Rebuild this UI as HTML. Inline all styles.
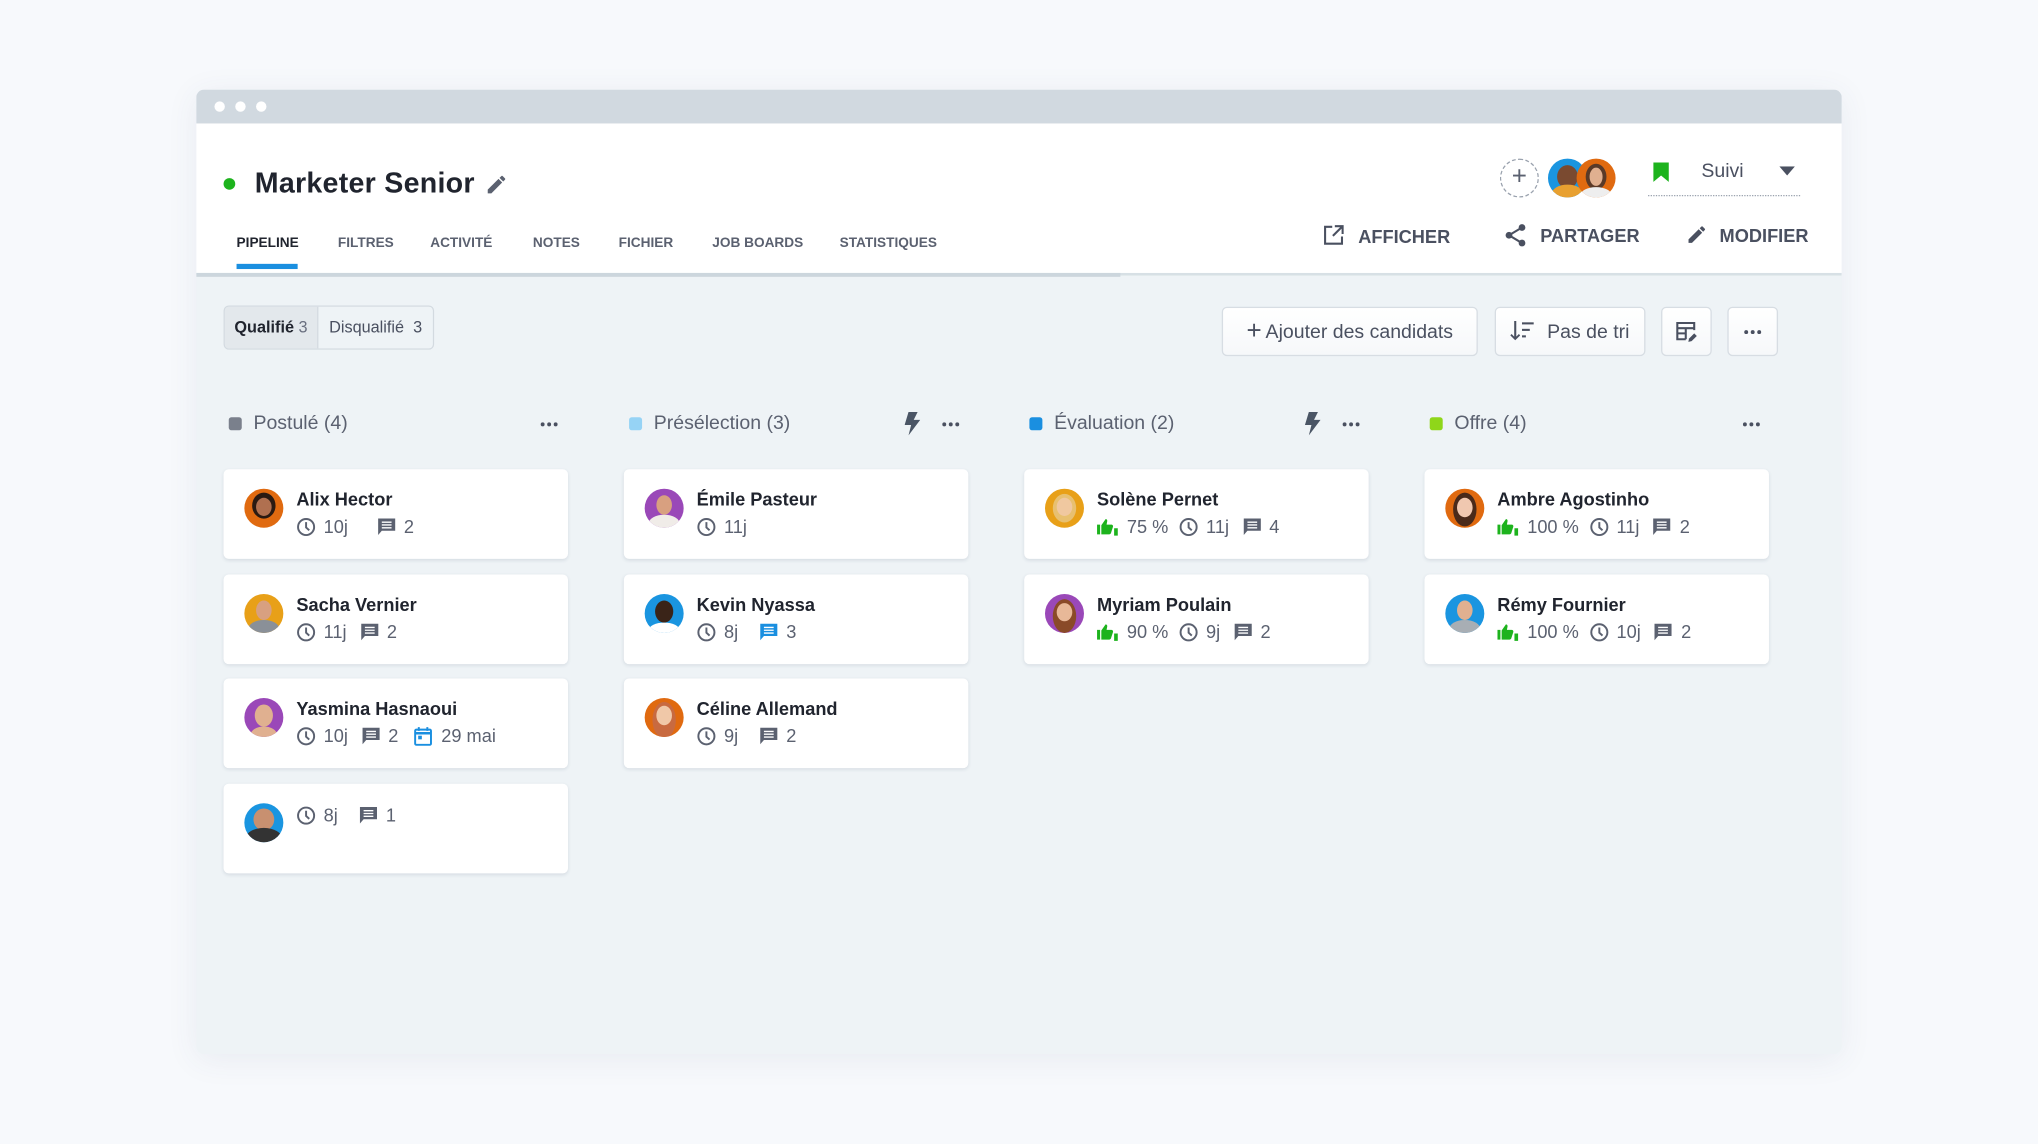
<!DOCTYPE html>
<html><head><meta charset="utf-8"><style>
*{box-sizing:border-box;margin:0;padding:0}
html,body{width:2038px;height:1144px;overflow:hidden;background:#f7f9fc;font-family:"Liberation Sans",sans-serif}
#s{position:absolute;left:0;top:0;width:1568px;height:880px;transform:scale(1.29974);transform-origin:0 0}
.a{position:absolute}
.win{left:151px;top:69px;width:1266px;height:742px;background:#eef3f6;border-radius:6px;overflow:hidden;box-shadow:0 4px 24px rgba(60,80,110,.08)}
.tb{left:0;top:0;width:1266px;height:26px;background:#d1d9e0}
.dot{width:8px;height:8px;border-radius:50%;background:#fff;top:9px}
.hd{left:0;top:26px;width:1266px;height:117px;background:#fff;border-bottom:2px solid #d7e0e5}
.tab{font-size:10.5px;font-weight:700;color:#5b6170;top:112px}
.btn{background:#fff;border:1px solid #d7dde3;border-radius:4px;height:38px;top:236px;display:flex;align-items:center;justify-content:center;color:#4a5060;font-size:15px;background:linear-gradient(#fff,#f6f8fa)}
.col{font-size:15px;color:#5b6170;top:317px;display:flex;align-items:center}
.sq{width:10px;height:10px;border-radius:2px;margin-right:9px}
.dots{font-size:14px;font-weight:700;color:#5b6170;letter-spacing:0px}
.d3{position:absolute;display:flex;gap:2px}
.d3 i{width:3px;height:3px;border-radius:50%;background:#4a5060;display:block}
.card{position:absolute;width:265px;height:69px;background:#fff;border-radius:4px;box-shadow:0 1px 3px rgba(40,60,90,.12)}
.av{position:absolute;left:16px;top:15px;width:30px;height:30px;border-radius:50%;overflow:hidden}
.nm{position:absolute;left:56px;top:15px;font-size:14px;font-weight:600;color:#20242e}
.mt{position:absolute;left:56px;top:36px;display:flex;align-items:center;font-size:14px;color:#5b6170;white-space:nowrap}
.mt svg{margin-right:6px}
.mt span{margin-right:14px}
</style></head><body><div id="s">
<div class="a win">
 <div class="a tb"></div>
 <div class="a dot" style="left:14px"></div><div class="a dot" style="left:30px"></div><div class="a dot" style="left:46px"></div>
 <div class="a hd"></div>
 <div class="a" style="left:0;top:141px;width:711px;height:3px;background:#ccd6dd"></div>
 <div class="a" style="left:21px;top:68px;width:9px;height:9px;border-radius:50%;background:#1db31d"></div>
 <div class="a" style="left:45px;top:59px;font-size:22px;font-weight:700;color:#20242e;letter-spacing:.2px">Marketer Senior</div>
 <svg class="a" style="left:222px;top:64px" width="18" height="18" viewBox="0 0 24 24"><path d="M3 17.25V21h3.75L17.8 9.94l-3.75-3.75zM20.7 7.04a1 1 0 000-1.41l-2.34-2.34a1 1 0 00-1.41 0l-1.83 1.83 3.75 3.75z" fill="#5b6170"/></svg>
 <div class="a tab" style="left:31px;color:#20242e">PIPELINE</div>
 <div class="a" style="left:31px;top:134px;width:47px;height:4px;background:#1a8fe0"></div>
 <div class="a tab" style="left:109px">FILTRES</div>
 <div class="a tab" style="left:180px">ACTIVITÉ</div>
 <div class="a tab" style="left:259px">NOTES</div>
 <div class="a tab" style="left:325px">FICHIER</div>
 <div class="a tab" style="left:397px">JOB BOARDS</div>
 <div class="a tab" style="left:495px">STATISTIQUES</div>
 <div class="a" style="left:1003px;top:53px;width:30px;height:30px;border-radius:50%;border:1.5px dashed #9aa2ae;color:#5b6170;font-size:20px;line-height:26px;text-align:center">+</div>
 <div class="a" style="left:1040px;top:53px;width:30px;height:30px;border-radius:50%;background:#1a95e0;overflow:hidden"><div style="position:absolute;left:7px;top:5px;width:16px;height:18px;border-radius:50%;background:#7a4a30"></div><div style="position:absolute;left:3px;top:20px;width:24px;height:14px;border-radius:50%;background:#e8a030"></div></div>
 <div class="a" style="left:1062px;top:53px;width:30px;height:30px;border-radius:50%;background:#e06a10;overflow:hidden"><div style="position:absolute;left:7px;top:4px;width:16px;height:20px;border-radius:50%;background:#e0b090;border:3px solid #5a3a28"></div><div style="position:absolute;left:3px;top:22px;width:24px;height:12px;border-radius:50%;background:#eee"></div></div>
 <svg class="a" style="left:1121px;top:56px" width="12" height="15" viewBox="0 0 12 15"><path d="M0 0h12v15L6 10 0 15z" fill="#1db31d"/></svg>
 <div class="a" style="left:1158px;top:54px;font-size:15px;color:#4a5060">Suivi</div>
 <svg class="a" style="left:1218px;top:59px" width="12" height="7"><path d="M0 0h12L6 7z" fill="#4a5060"/></svg>
 <div class="a" style="left:1117px;top:81px;width:117px;border-top:1px dotted #9aa2ae"></div>
 <svg class="a" style="left:867px;top:104px" width="16" height="16" viewBox="0 0 16 16" fill="none" stroke="#4a5060" stroke-width="1.6"><path d="M7 1.5H1.5v13h13V9M9 1h6v6M15 1L7.5 8.5"/></svg>
 <div class="a" style="left:894px;top:105px;font-size:14px;font-weight:700;color:#4a5060">AFFICHER</div>
 <svg class="a" style="left:1007px;top:103px" width="16" height="18" viewBox="0 0 16 18"><circle cx="13" cy="3" r="2.6" fill="#4a5060"/><circle cx="3" cy="9" r="2.6" fill="#4a5060"/><circle cx="13" cy="15" r="2.6" fill="#4a5060"/><path d="M13 3L3 9l10 6" stroke="#4a5060" stroke-width="1.6" fill="none"/></svg>
 <div class="a" style="left:1034px;top:104px;font-size:14px;font-weight:700;color:#4a5060">PARTAGER</div>
 <svg class="a" style="left:1146px;top:103px" width="17" height="17" viewBox="0 0 24 24"><path d="M3 17.25V21h3.75L17.8 9.94l-3.75-3.75zM20.7 7.04a1 1 0 000-1.41l-2.34-2.34a1 1 0 00-1.41 0l-1.83 1.83 3.75 3.75z" fill="#4a5060"/></svg>
 <div class="a" style="left:1172px;top:104px;font-size:14px;font-weight:700;color:#4a5060">MODIFIER</div>
 <div class="a" style="left:21px;top:166px;width:162px;height:34px;border:1px solid #d3dae0;border-radius:4px;display:flex;font-size:12.5px;overflow:hidden">
  <div style="width:72px;background:#e3e8ec;color:#20242e;display:flex;align-items:center;justify-content:center;border-right:1px solid #d3dae0;font-weight:600">Qualifié&nbsp;<span style="color:#6a7080;font-weight:400">3</span></div>
  <div style="flex:1;background:#eef3f6;color:#4a5060;display:flex;align-items:center;justify-content:center">Disqualifié&nbsp;&nbsp;3</div>
 </div>
</div>
<div class="a btn" style="left:940px;width:197px"><span style="font-size:20px;margin-right:3px;font-weight:300">+</span>Ajouter des candidats</div>
<div class="a btn" style="left:1150px;width:116px"><svg width="19" height="16" viewBox="0 0 19 16" style="margin-right:9px" fill="#4a5060"><path d="M3 0h1.6v12l2-2 1 1L3.8 14.8 0 11l1-1 2 2z"/><rect x="9" y="1" width="9" height="1.6"/><rect x="9" y="6" width="6" height="1.6"/><rect x="9" y="11" width="3" height="1.6"/></svg>Pas de tri</div>
<div class="a btn" style="left:1278px;width:39px"><svg width="17" height="17" viewBox="0 0 17 17" fill="none" stroke="#4a5060" stroke-width="1.6"><path d="M8 14H1.5V1.5h13V7M1.5 5.5h13M8 5.5V14M1.5 9.5H8"/><path d="M10 16l.5-2.5 4-4 2 2-4 4z" fill="#4a5060" stroke="none"/></svg></div>
<div class="a btn" style="left:1329px;width:39px"><div class="d3" style="position:static"><i></i><i></i><i></i></div></div>
<div class="a col" style="left:176px"><div class="sq" style="background:#7a808c"></div>Postulé (4)</div>
<div class="d3" style="left:416px;top:325px"><i></i><i></i><i></i></div>
<div class="a col" style="left:484px"><div class="sq" style="background:#96d3f5"></div>Présélection (3)</div>
<svg class="a" style="left:696px;top:317px" width="12" height="18" viewBox="0 0 12 18"><path d="M3 0h7L7 6h5L3 18l2-8H0z" fill="#4a5565"/></svg>
<div class="d3" style="left:725px;top:325px"><i></i><i></i><i></i></div>
<div class="a col" style="left:792px"><div class="sq" style="background:#1a8fe0"></div>Évaluation (2)</div>
<svg class="a" style="left:1004px;top:317px" width="12" height="18" viewBox="0 0 12 18"><path d="M3 0h7L7 6h5L3 18l2-8H0z" fill="#4a5565"/></svg>
<div class="d3" style="left:1033px;top:325px"><i></i><i></i><i></i></div>
<div class="a col" style="left:1100px"><div class="sq" style="background:#8fd61a"></div>Offre (4)</div>
<div class="d3" style="left:1341px;top:325px"><i></i><i></i><i></i></div>

<svg width="0" height="0" style="position:absolute"><defs>
<symbol id="ck" viewBox="0 0 16 16"><circle cx="8" cy="8" r="6.6" fill="none" stroke="#5b6170" stroke-width="1.6"/><path d="M8 4v4.3l2.6 2.4" fill="none" stroke="#5b6170" stroke-width="1.6"/></symbol>
<symbol id="cm" viewBox="0 0 16 16"><path d="M1 1h14v10H4l-3 3.5z" fill="#5b6170"/><path d="M4 4h8M4 6.3h8M4 8.6h8" stroke="#fff" stroke-width="1.1"/></symbol>
<symbol id="cb" viewBox="0 0 16 16"><path d="M1 1h14v10H4l-3 3.5z" fill="#1a8fe0"/><path d="M4 4h8M4 6.3h8M4 8.6h8" stroke="#fff" stroke-width="1.1"/></symbol>
<symbol id="th" viewBox="0 0 18 16"><path d="M0 6h2.5v8H0zM3.5 6.5L7 1.5c1 0 1.6.8 1.3 2L7.8 6h4c1 0 1.6 1 1.2 2l-1.6 5c-.3.7-.8 1-1.5 1H3.5z" fill="#1db31d"/><path d="M14 9h3v6h-3z" fill="#1db31d"/></symbol>
<symbol id="cal" viewBox="0 0 16 16"><rect x="1.5" y="2.5" width="13" height="12.5" rx="1" fill="none" stroke="#1a8fe0" stroke-width="1.6"/><path d="M1.5 5.5h13" stroke="#1a8fe0" stroke-width="2"/><path d="M4.5 0.5v3M11.5 0.5v3" stroke="#1a8fe0" stroke-width="1.6"/><rect x="4" y="7.5" width="3" height="3" fill="#1a8fe0"/></symbol>
</defs></svg>

<div class="card" style="left:172px;top:361px"><div class="av" style="background:#e06a10"><div style="position:absolute;left:6px;top:3px;width:18px;height:20px;border-radius:50%;background:#2a1a12"></div><div style="position:absolute;left:9px;top:7px;width:12px;height:14px;border-radius:50%;background:#b07050"></div></div><div class="nm">Alix Hector</div><div class="mt"><svg width="15" height="15"><use href="#ck"/></svg><span>10j</span><svg width="15" height="15" style="margin-left:8px"><use href="#cm"/></svg><span>2</span></div></div>
<div class="card" style="left:172px;top:442px"><div class="av" style="background:#e8a018"><div style="position:absolute;left:9px;top:5px;width:12px;height:15px;border-radius:50%;background:#d8a080"></div><div style="position:absolute;left:3px;top:20px;width:24px;height:14px;border-radius:50%;background:#8a9098"></div></div><div class="nm">Sacha Vernier</div><div class="mt"><svg width="15" height="15"><use href="#ck"/></svg><span>11j</span><svg width="15" height="15" style="margin-left:-4px"><use href="#cm"/></svg><span>2</span></div></div>
<div class="card" style="left:172px;top:522px"><div class="av" style="background:#9a48b8"><div style="position:absolute;left:8px;top:5px;width:14px;height:17px;border-radius:50%;background:#e0b090"></div><div style="position:absolute;left:5px;top:22px;width:20px;height:12px;border-radius:50%;background:#e0b090"></div></div><div class="nm">Yasmina Hasnaoui</div><div class="mt"><svg width="15" height="15"><use href="#ck"/></svg><span>10j</span><svg width="15" height="15" style="margin-left:-4px"><use href="#cm"/></svg><span>2</span><svg width="15" height="15" style="margin-left:-2px"><use href="#cal"/></svg><span>29 mai</span></div></div>
<div class="card" style="left:172px;top:603px"><div class="av" style="background:#1a95e0;top:15px"><div style="position:absolute;left:7px;top:4px;width:16px;height:17px;border-radius:50%;background:#c89070"></div><div style="position:absolute;left:1px;top:19px;width:28px;height:16px;border-radius:50%;background:#333"></div></div><div class="mt" style="top:16px"><svg width="15" height="15"><use href="#ck"/></svg><span>8j</span><svg width="15" height="15" style="margin-left:2px"><use href="#cm"/></svg><span>1</span></div></div>
<div class="card" style="left:480px;top:361px"><div class="av" style="background:#9a48b8"><div style="position:absolute;left:9px;top:5px;width:12px;height:15px;border-radius:50%;background:#d8a080"></div><div style="position:absolute;left:3px;top:20px;width:24px;height:14px;border-radius:50%;background:#f0ece8"></div></div><div class="nm">Émile Pasteur</div><div class="mt"><svg width="15" height="15"><use href="#ck"/></svg><span>11j</span></div></div>
<div class="card" style="left:480px;top:442px"><div class="av" style="background:#1a95e0"><div style="position:absolute;left:8px;top:5px;width:14px;height:17px;border-radius:50%;background:#3a2418"></div><div style="position:absolute;left:3px;top:22px;width:24px;height:12px;border-radius:50%;background:#fff"></div></div><div class="nm">Kevin Nyassa</div><div class="mt"><svg width="15" height="15"><use href="#ck"/></svg><span>8j</span><svg width="15" height="15" style="margin-left:2px"><use href="#cb"/></svg><span>3</span></div></div>
<div class="card" style="left:480px;top:522px"><div class="av" style="background:#e06a10"><div style="position:absolute;left:6px;top:3px;width:18px;height:28px;border-radius:50%;background:#c86a40"></div><div style="position:absolute;left:9px;top:6px;width:12px;height:15px;border-radius:50%;background:#f0c8a8"></div></div><div class="nm">Céline Allemand</div><div class="mt"><svg width="15" height="15"><use href="#ck"/></svg><span>9j</span><svg width="15" height="15" style="margin-left:2px"><use href="#cm"/></svg><span>2</span></div></div>
<div class="card" style="left:788px;top:361px"><div class="av" style="background:#e8a018"><div style="position:absolute;left:6px;top:4px;width:18px;height:22px;border-radius:50%;background:#e8c070"></div><div style="position:absolute;left:9px;top:7px;width:12px;height:14px;border-radius:50%;background:#f0c8a0"></div></div><div class="nm">Solène Pernet</div><div class="mt"><svg width="17" height="15"><use href="#th"/></svg><span>75 %</span><svg width="15" height="15" style="margin-left:-6px"><use href="#ck"/></svg><span>11j</span><svg width="15" height="15" style="margin-left:-4px"><use href="#cm"/></svg><span>4</span></div></div>
<div class="card" style="left:788px;top:442px"><div class="av" style="background:#9a48b8"><div style="position:absolute;left:6px;top:4px;width:18px;height:26px;border-radius:50%;background:#8a4a28"></div><div style="position:absolute;left:9px;top:7px;width:12px;height:14px;border-radius:50%;background:#e8b898"></div></div><div class="nm">Myriam Poulain</div><div class="mt"><svg width="17" height="15"><use href="#th"/></svg><span>90 %</span><svg width="15" height="15" style="margin-left:-6px"><use href="#ck"/></svg><span>9j</span><svg width="15" height="15" style="margin-left:-4px"><use href="#cm"/></svg><span>2</span></div></div>
<div class="card" style="left:1096px;top:361px"><div class="av" style="background:#e06a10"><div style="position:absolute;left:6px;top:3px;width:18px;height:26px;border-radius:50%;background:#4a2a1a"></div><div style="position:absolute;left:9px;top:7px;width:12px;height:15px;border-radius:50%;background:#f0c8b0"></div></div><div class="nm">Ambre Agostinho</div><div class="mt"><svg width="17" height="15"><use href="#th"/></svg><span>100 %</span><svg width="15" height="15" style="margin-left:-6px"><use href="#ck"/></svg><span>11j</span><svg width="15" height="15" style="margin-left:-4px"><use href="#cm"/></svg><span>2</span></div></div>
<div class="card" style="left:1096px;top:442px"><div class="av" style="background:#1a95e0"><div style="position:absolute;left:9px;top:5px;width:12px;height:15px;border-radius:50%;background:#e0b090"></div><div style="position:absolute;left:3px;top:20px;width:24px;height:14px;border-radius:50%;background:#a8aeb4"></div></div><div class="nm">Rémy Fournier</div><div class="mt"><svg width="17" height="15"><use href="#th"/></svg><span>100 %</span><svg width="15" height="15" style="margin-left:-6px"><use href="#ck"/></svg><span>10j</span><svg width="15" height="15" style="margin-left:-4px"><use href="#cm"/></svg><span>2</span></div></div>
</div></body></html>
